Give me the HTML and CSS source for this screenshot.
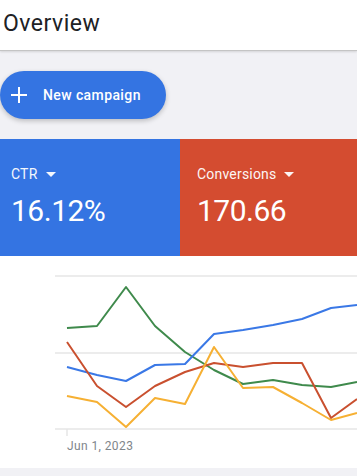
FILE: index.html
```html
<!DOCTYPE html>
<html>
<head>
<meta charset="utf-8">
<link rel="stylesheet" href="styles.css">
</head>
<body>
<header class="topbar"><h1 class="title">Overview</h1></header>
<div class="actions">
  <button class="fab">
    <svg class="plus" width="16" height="16" viewBox="0 0 16 16"><path d="M8 0v16M0 8h16" stroke="#fff" stroke-width="2"/></svg>
    <span>New campaign</span>
  </button>
</div>
<section class="metrics">
  <div class="metric ctr">
    <div class="label">CTR <span class="caret"></span></div>
    <div class="value">16.12%</div>
  </div>
  <div class="metric conv">
    <div class="label">Conversions <span class="caret"></span></div>
    <div class="value">170.66</div>
  </div>
</section>
<section class="chart">
  <svg class="plot" width="357" height="181" viewBox="0 256 357 181">
    <g stroke="#e6e6e6" stroke-width="1.5">
      <line x1="55" y1="276" x2="357" y2="276"/>
      <line x1="55" y1="353" x2="357" y2="353"/>
      <line x1="55" y1="429" x2="357" y2="429"/>
      <line x1="67" y1="429" x2="67" y2="436"/>
    </g>
    <g fill="none" stroke-width="2" stroke-linejoin="round">
      <polyline stroke="#3f8a4c" points="67,328 97,326 126,287 155,326 185,352 214,370 243,384 273,380 302,385 331,387 357,382"/>
      <polyline stroke="#3a78e6" points="67,367 97,375 126,381 155,365 185,364 214,334 243,330 273,325 302,319 331,308 357,305"/>
      <polyline stroke="#c9502f" points="67,342 97,386 126,407 155,386 185,372 214,363 243,367 273,363 302,363 331,418 357,399"/>
      <polyline stroke="#f6b033" points="67,396 97,402 126,427 155,398 185,404 214,347 243,388 273,387 302,403 331,420 357,413"/>
    </g>
  </svg>
  <div class="axis-label">Jun 1, 2023</div>
</section>
</body>
</html>
```
FILE: styles.css
```css
* { box-sizing: border-box; }
body {
  margin: 0;
  background: #f1f1f5;
  font-family: Roboto, "Noto Sans", sans-serif;
  width: 357px;
  overflow: hidden;
}
.topbar {
  height: 51px;
  background: #fff;
  border-bottom: 1px solid #c4c4c4;
  box-shadow: 0 1px 2px rgba(0,0,0,0.12);
  display: flex;
  align-items: center;
  padding-left: 3px;
}
.title {
  margin: 0;
  font-size: 23px;
  font-weight: 400;
  letter-spacing: 0.5px;
  color: #202124;
  line-height: 26px;
  margin-top: -2px;
}
.actions {
  padding-top: 20px;
}
.fab {
  display: flex;
  align-items: center;
  height: 48px;
  width: 166px;
  border: none;
  border-radius: 24px;
  background: #3474e2;
  color: #fff;
  font-family: Roboto, sans-serif;
  font-size: 14px;
  font-weight: 500;
  letter-spacing: 0.4px;
  padding: 0 0 0 11px;
  box-shadow: 0 2px 5px rgba(0,0,0,0.22);
}
.plus { margin-right: 16px; }
.metrics {
  margin-top: 20px;
  display: grid;
  grid-template-columns: 180px 177px;
  height: 117px;
}
.metric {
  padding: 27px 0 0 11px;
  color: #fff;
}
.ctr { background: #3474e2; }
.conv { background: #d44c30; padding-left: 17px; }
.label {
  font-size: 14px;
  line-height: 16px;
  display: flex;
  align-items: center;
  letter-spacing: 0.2px;
  opacity: 0.95;
}
.caret {
  display: inline-block;
  width: 0; height: 0;
  border-left: 5px solid transparent;
  border-right: 5px solid transparent;
  border-top: 5px solid #fff;
  margin-left: 8px;
}
.value {
  margin-top: 11px;
  font-size: 30px;
  line-height: 36px;
  font-weight: 400;
  letter-spacing: -0.5px;
}
.chart {
  background: #fff;
  height: 212px;
  box-shadow: 0 1px 3px rgba(0,0,0,0.18);
}
.plot { display: block; }
.axis-label {
  padding-left: 67px;
  margin-top: 2px;
  font-size: 12px;
  line-height: 14px;
  letter-spacing: 0.4px;
  color: #80868b;
}
```
